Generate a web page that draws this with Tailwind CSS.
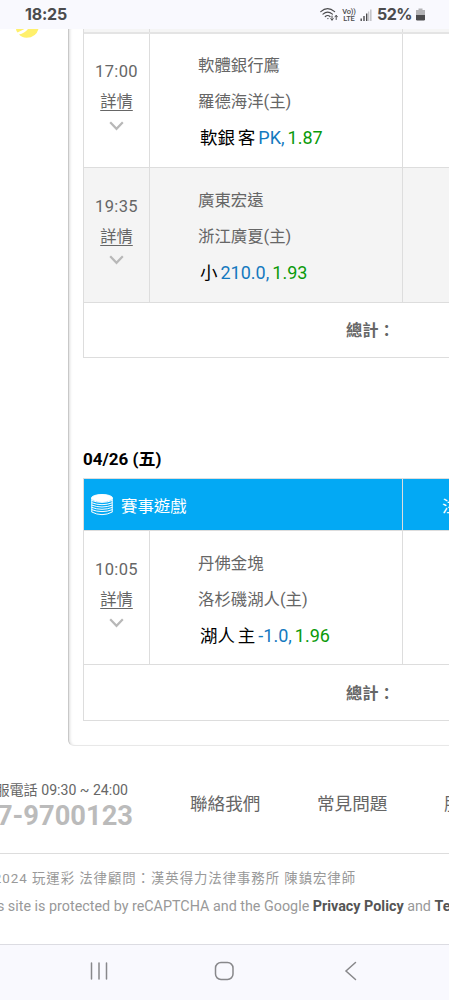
<!DOCTYPE html>
<html lang="zh-Hant">
<head>
    <meta charset="UTF-8">
    <meta name="viewport" content="width=device-width, initial-scale=1.0">
    <title>玩運彩</title>
    <script src="https://cdn.jsdelivr.net/npm/@tailwindcss/browser@4"></script>
</head>
<body class="flex h-[1000px] w-[449px] flex-col overflow-hidden bg-white font-['Roboto','Noto_Sans_CJK_TC',sans-serif] whitespace-nowrap text-[#666]">
    <!-- Status bar -->
    <header class="flex h-[29px] shrink-0 items-center bg-[#f9f9fe] pl-[25px] text-[#4b4b4d]">
        <span class="w-[295px] font-['Inter','Roboto',sans-serif] text-[16px] font-bold leading-[29px] tracking-[-0.2px]">18:25</span>
        <svg class="h-[15px] w-[18px]" viewBox="0 0 18 15" fill="none" stroke="currentColor" stroke-width="1.2" stroke-linecap="round">
            <path d="M.8 4.6Q7.5-1.2 14.6 4.6M3 7.1Q7.6 3.2 12.4 7.1M5.3 9.5Q7.7 7.5 10 9.5" />
            <circle cx="7.9" cy="11.6" r=".7" fill="currentColor" stroke="none" />
            <path stroke-width="1" d="M12 9v4m-1.3-1.300 1.300 1.500 1.300-1.500M16.200 12.500V8.500m-1.300 1.400 1.300-1.500 1.300 1.500" />
        </svg>
        <span class="ml-[4px] w-[14px] text-center text-[7.5px] font-medium leading-[7px] tracking-[-0.2px]">Vo))<br>LTE</span>
        <svg class="ml-[4px] h-[12px] w-[12px]" viewBox="0 0 12 12" fill="currentColor">
            <path d="M.5 9.500h1.400v2.500H.5zM3.300 7h1.400v5H3.300zM6 4.500h1.400V12H6z" />
            <path fill="#c5c5ca" d="M7.900 2.500h1.400V12H7.900zM10 .5h1.600V12H10z" />
        </svg>
        <span class="ml-[5px] w-[36px] font-['Inter','Roboto',sans-serif] text-[16px] font-bold leading-[29px] tracking-[-0.500px]">52%</span>
        <svg class="ml-[3px] h-[13px] w-[9px]" viewBox="0 0 9 13">
            <path fill="#b3b3b6" d="M2.500.5h4v1.600H9V7H0V2.100h2.500z" />
            <path fill="#4b4b4d" d="M0 7h9v4.300Q9 12.500 7.800 12.500H1.200Q0 12.500 0 11.300z" />
        </svg>
    </header>

    <main class="h-[915px] shrink-0 overflow-hidden">
        <div class="flex h-[717px]">
            <aside class="w-[68px] shrink-0">
                <svg class="ml-[15px] h-[10px] w-[25px]" viewBox="0 0 25 10">
                    <path fill="#fff06c" d="M1 0h8.500L2.500 3.500Q1.200 2 1 0zM13 0h10.500Q21 8.500 11.500 8.800 6.500 8.500 4 5.500 9.500 4.200 13 0z" />
                </svg>
            </aside>
            <section class="w-[381px] shrink-0 rounded-bl-[6px] border-b border-l border-b-[#e8e8e8] border-l-[#c8c8c8] pl-[14px] shadow-[inset_3px_0_3px_-2px_#ddd]">
                <!-- First day -->
                <div class="w-[366px] border-l border-[#ddd]">
                    <div class="flex h-[5px] border-b-2 border-[#e4e4e4] bg-[#f5f5f5]">
                        <div class="w-[66px] border-r border-[#ddd]"></div>
                        <div class="w-[253px] border-r border-[#ddd]"></div>
                    </div>
                    <div class="flex h-[134px] border-b border-[#ddd]">
                        <div class="flex w-[66px] shrink-0 flex-col items-center border-r border-[#ddd] pt-[22px]">
                            <div class="text-[16.500px] leading-[32px] tracking-[0.35px]">17:00</div>
                            <div class="text-[16.300px] leading-[28px] underline underline-offset-[3px]">詳情</div>
                            <svg class="mt-[5px] h-[10px] w-[15px]" viewBox="0 0 15 10" fill="none" stroke="#b8b8b8" stroke-width="2.200"><path d="m1.200 1.300 6.300 6.500 6.300-6.500" /></svg>
                        </div>
                        <div class="w-[253px] shrink-0 border-r border-[#ddd] pt-[14px] pl-[48px]">
                            <div class="text-[16.400px] leading-[36px]">軟體銀行鷹</div>
                            <div class="text-[16.400px] leading-[36px]">羅德海洋(主)</div>
                            <div class="pl-[2px] text-[17.500px] leading-[36px] [word-spacing:-1.5px] text-black">軟銀 客<span class="ml-[3px] text-[18px] text-[#1479bf]">PK,</span><span class="ml-[3px] text-[18px] text-[#0a9a0a]">1.87</span></div>
                        </div>
                    </div>
                    <div class="flex h-[135px] border-b border-[#ddd] bg-[#f4f4f4]">
                        <div class="flex w-[66px] shrink-0 flex-col items-center border-r border-[#ddd] pt-[23px]">
                            <div class="text-[16.500px] leading-[32px] tracking-[0.35px]">19:35</div>
                            <div class="text-[16.300px] leading-[27px] underline underline-offset-[3px]">詳情</div>
                            <svg class="mt-[5px] h-[10px] w-[15px]" viewBox="0 0 15 10" fill="none" stroke="#b8b8b8" stroke-width="2.200"><path d="m1.200 1.300 6.300 6.500 6.300-6.500" /></svg>
                        </div>
                        <div class="w-[253px] shrink-0 border-r border-[#ddd] pt-[15px] pl-[48px]">
                            <div class="text-[16.400px] leading-[36px]">廣東宏遠</div>
                            <div class="text-[16.400px] leading-[36px]">浙江廣夏(主)</div>
                            <div class="pl-[2px] text-[17.500px] leading-[36px] [word-spacing:-1.5px] text-black">小<span class="ml-[3px] text-[18px] text-[#1479bf]">210.0,</span><span class="ml-[3px] text-[18px] text-[#0a9a0a]">1.93</span></div>
                        </div>
                    </div>
                    <div class="h-[55px] border-b border-[#ddd] pl-[262px] text-[16.300px] font-bold leading-[56px]">總計：</div>
                </div>

                <!-- Second day -->
                <h2 class="mt-[85px] h-[35px] text-[17px] font-bold leading-[32px] text-black">04/26 (五)</h2>
                <div class="w-[366px] border-t border-l border-[#ddd]">
                    <div class="flex h-[52px] border-b border-[#ddd] bg-[#03a9f4] text-[16.400px] leading-[56px] text-white">
                        <div class="flex w-[319px] shrink-0 border-r border-[#ddd] pl-[7px]">
                            <svg class="mt-[15px] h-[22px] w-[22px]" viewBox="0 0 22 22" fill="none" stroke="white">
                                <ellipse cx="11" cy="4" rx="10.500" ry="3.500" fill="white" />
                                <path stroke-width="1" d="M.8 4v14M21.200 4v14M.5 6.400q10.500 4 21 0M.5 8.700q10.500 4 21 0M.5 11q10.500 4 21 0M.5 13.300q10.500 4 21 0M.5 15.600q10.500 4 21 0M.5 17.900q10.500 5.500 21 0" />
                            </svg>
                            <span class="ml-[8px]">賽事遊戲</span>
                        </div>
                        <div class="pl-[39px]">注額</div>
                    </div>
                    <div class="flex h-[134px] border-b border-[#ddd]">
                        <div class="flex w-[66px] shrink-0 flex-col items-center border-r border-[#ddd] pt-[23px]">
                            <div class="text-[16.500px] leading-[32px] tracking-[0.35px]">10:05</div>
                            <div class="text-[16.300px] leading-[27px] underline underline-offset-[3px]">詳情</div>
                            <svg class="mt-[5px] h-[10px] w-[15px]" viewBox="0 0 15 10" fill="none" stroke="#b8b8b8" stroke-width="2.200"><path d="m1.200 1.300 6.300 6.500 6.300-6.500" /></svg>
                        </div>
                        <div class="w-[253px] shrink-0 border-r border-[#ddd] pt-[15px] pl-[48px]">
                            <div class="text-[16.400px] leading-[36px]">丹佛金塊</div>
                            <div class="text-[16.400px] leading-[36px]">洛杉磯湖人(主)</div>
                            <div class="pl-[2px] text-[17.500px] leading-[36px] [word-spacing:-1.5px] text-black">湖人 主<span class="ml-[3px] text-[18px] text-[#1479bf]">-1.0,</span><span class="ml-[3px] text-[18px] text-[#0a9a0a]">1.96</span></div>
                        </div>
                    </div>
                    <div class="h-[56px] border-b border-[#ddd] pl-[262px] text-[16.300px] font-bold leading-[58px]">總計：</div>
                </div>
            </section>
        </div>

        <!-- Footer -->
        <footer>
            <div class="flex h-[108px] border-b border-[#ddd] text-[17.600px]">
                <div class="flex w-[133px] shrink-0 flex-col items-end pt-[32px]">
                    <div class="mr-[5px] text-[14.100px] leading-[24px]">客服電話 09:30 ~ 24:00</div>
                    <div class="text-[27.300px] font-bold leading-[28px] text-[#bbb]">07-9700123</div>
                </div>
                <a class="ml-[57px] w-[127px] shrink-0 leading-[117px]">聯絡我們</a>
                <a class="w-[127px] shrink-0 leading-[117px]">常見問題</a>
                <a class="shrink-0 leading-[117px]">服務條款</a>
            </div>
            <div class="pt-[11px] text-[#999]">
                <div class="flex w-[356px] justify-end text-[13.400px] leading-[28px] tracking-[0.95px]">© 2024 玩運彩 法律顧問：漢英得力法律事務所 陳鎮宏律師</div>
                <div class="-ml-[23px] text-[14.330px] leading-[26px]">This site is protected by reCAPTCHA and the Google <b class="text-[#555]">Privacy Policy</b> and <b class="text-[#555]">Terms of Service</b></div>
            </div>
        </footer>
    </main>

    <!-- Navigation bar -->
    <nav class="flex h-[56px] shrink-0 items-start border-t border-[#dcdce2] bg-[#f9f9fe] pt-[16px] pl-[89px] text-[#88888b]">
        <svg class="h-[20px] w-[20px]" viewBox="0 0 20 20" fill="none" stroke="currentColor" stroke-width="1.500" stroke-linecap="round"><path d="M2.500 2v16M10 2v16M17.500 2v16" /></svg>
        <svg class="ml-[105px] h-[20px] w-[20px]" viewBox="0 0 20 20" fill="none" stroke="currentColor" stroke-width="1.500"><rect x="1.500" y="1.500" width="17.500" height="17" rx="5.500" /></svg>
        <svg class="ml-[108px] h-[20px] w-[18px]" viewBox="0 0 18 20" fill="none" stroke="currentColor" stroke-width="1.500" stroke-linecap="round"><path d="m13.500 1.500-9.500 8.500 9.500 8.500" /></svg>
    </nav>
</body>
</html>
